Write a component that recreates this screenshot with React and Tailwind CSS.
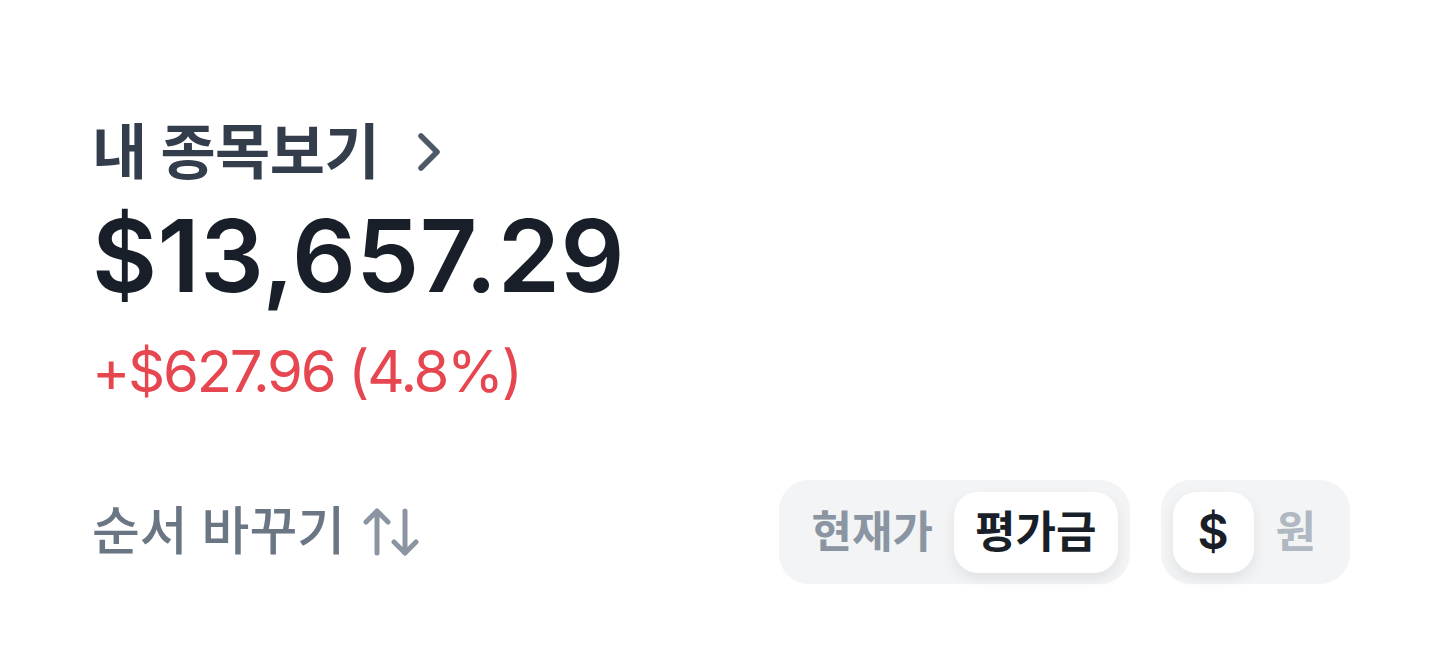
import React from 'react';

const kr = { fontFamily: 'Inter, "Noto Sans CJK KR", sans-serif' };

const SortArrows = () => (
  <svg width="56" height="50" viewBox="0 0 56 50" fill="none" stroke="#8b95a1" strokeWidth="5" strokeLinecap="round" strokeLinejoin="round">
    <path d="M14 46V4M3 15L14 4l11 11" />
    <path d="M42 4v42M31 35l11 11 11-11" />
  </svg>
);

export default function App() {
  return (
    <div className="w-[1439px] h-[646px] bg-white overflow-hidden pl-[92px] pr-[89px] pt-[112px]" style={kr}>
      <div className="flex items-center gap-[36px] h-[80px]">
        <h2 className="text-[60px] font-bold text-[#333d4b] tracking-[-0.5px] leading-none">내 종목보기</h2>
        <svg width="28" height="40" viewBox="0 0 28 40" fill="none" stroke="#4e5968" strokeWidth="5.5" strokeLinecap="round" strokeLinejoin="round">
          <path d="M6 4l16 16L6 36" />
        </svg>
      </div>
      <div className="text-[100px] font-semibold text-[#191f28] leading-none mt-[14px] tracking-[0.5px]">$13,657.29</div>
      <div className="text-[58px] text-[#e5464f] leading-none mt-[36px] tracking-[-2.3px]">+$627.96 (4.8%)</div>
      <div className="flex items-center justify-between mt-[80px]">
        <div className="flex items-center gap-[18px]">
          <span className="text-[52px] font-medium text-[#6b7684] leading-none">순서 바꾸기</span>
          <SortArrows />
        </div>
        <div className="flex items-center gap-[31px]">
          <div className="flex items-center h-[104px] rounded-[30px] bg-[#f2f4f6] p-[12px]">
            <span className="px-[21px] text-[44px] font-bold text-[#8b95a1] leading-none">현재가</span>
            <span className="flex items-center h-[81px] px-[21px] rounded-[24px] bg-white shadow-[0_6px_14px_rgba(0,0,0,0.08)] text-[44px] font-bold text-[#191f28] leading-none">평가금</span>
          </div>
          <div className="flex items-center h-[104px] rounded-[30px] bg-[#f2f4f6] p-[12px]">
            <span className="flex items-center justify-center w-[81px] h-[81px] rounded-[24px] bg-white shadow-[0_6px_14px_rgba(0,0,0,0.08)] text-[48px] font-semibold text-[#191f28] leading-none">$</span>
            <span className="px-[22px] text-[44px] font-bold text-[#b0b8c1] leading-none">원</span>
          </div>
        </div>
      </div>
    </div>
  );
}
